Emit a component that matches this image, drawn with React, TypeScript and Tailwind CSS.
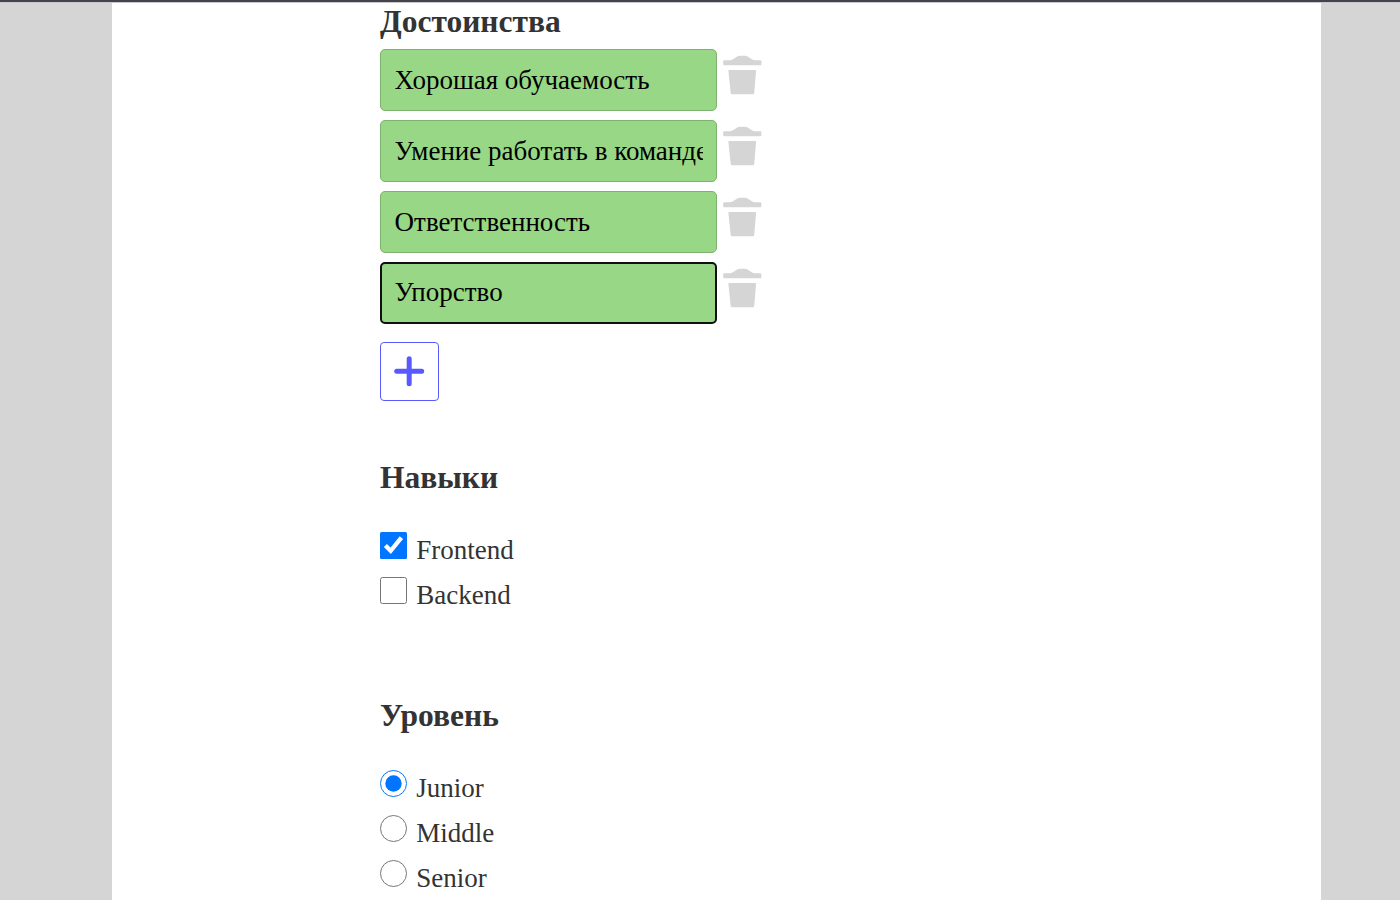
import { useState } from 'react';

const initialStrengths = ['Хорошая обучаемость', 'Умение работать в команде', 'Ответственность', 'Упорство'];

function TrashIcon() {
  return (
    <svg className="ml-1.5 mt-1.5 block h-10 w-[39px] shrink-0" viewBox="0 0 39 40" fill="#d5d5d5">
      <path d="M1.2 5.3H7Q8.4 5.2 9.6 4.5L14.2 1.5Q15.5.7 16.8.7H22Q23.3.7 24.6 1.5L29.2 4.5Q30.4 5.2 31.8 5.3H37.3Q38.4 5.3 38.4 6.3V9.3Q38.4 10.3 37.3 10.3H1.2Q.2 10.3.2 9.3V6.3Q.2 5.3 1.2 5.3Z" />
      <path d="M6.3 15H32.2Q33.2 15 33.1 16L31.2 38Q31 39.2 30 39.2H9Q7.9 39.2 7.7 38L5.4 16Q5.3 15 6.3 15Z" />
    </svg>
  );
}

function StrengthRow({ value, active, onChange }: { value: string; active: boolean; onChange: (v: string) => void }) {
  return (
    <div className="flex items-start">
      <input
        value={value}
        onChange={(e) => onChange(e.target.value)}
        className={
          'h-[62px] w-[337px] rounded-[5px] bg-[#98d785] text-[27px] text-black outline-none ' +
          (active ? 'border-2 border-[#101010] pb-px pl-[12.6px] pr-3' : 'border border-[#7db36d] pl-[13.6px] pr-[13px]')
        }
      />
      <button type="button" aria-label="Удалить">
        <TrashIcon />
      </button>
    </div>
  );
}

function Choice({ label, kind, checked, onSelect }: { label: string; kind: 'checkbox' | 'radio'; checked: boolean; onSelect: () => void }) {
  return (
    <label className="flex h-[45px] items-start">
      <input type={kind} checked={checked} onChange={onSelect} className="sr-only" />
      <svg className="block size-[27px]" viewBox="0 0 27 27" fill="none">
        {kind === 'checkbox' && checked && (
          <>
            <rect width="27" height="27" rx="1.5" fill="#0075ff" />
            <path d="M5.4 13.4L10.7 18.8L21.4 5.6" stroke="#fff" strokeWidth="4.3" />
          </>
        )}
        {kind === 'checkbox' && !checked && <rect x=".5" y=".5" width="26" height="26" rx="2" fill="#fff" stroke="#767676" />}
        {kind === 'radio' && <circle cx="13.5" cy="13.5" r="13" fill="#fff" stroke={checked ? '#0075ff' : '#767676'} />}
        {kind === 'radio' && checked && <circle cx="13.5" cy="13.5" r="8.2" fill="#0075ff" />}
      </svg>
      <span className="ml-[9.3px] mt-[3px] text-[27px] leading-[30px]">{label}</span>
    </label>
  );
}

export default function App() {
  const [strengths, setStrengths] = useState(initialStrengths);
  const [skills, setSkills] = useState(['Frontend']);
  const [level, setLevel] = useState('Junior');

  const toggleSkill = (s: string) => setSkills(skills.includes(s) ? skills.filter((x) => x !== s) : [...skills, s]);

  return (
    <div className="flex h-[900px] flex-col overflow-hidden bg-[#d5d5d5] font-['Liberation_Serif',serif] text-[#333333]">
      <div className="h-[3px] shrink-0 border-b border-[#c9c8ca] bg-[#45414e]" />
      <main className="ml-28 h-[897px] w-[1209px] bg-white pl-[268px]">
        <h2 className="h-[46px] pt-px text-[31.5px] font-bold leading-9">Достоинства</h2>
        <div className="flex flex-col gap-[9px]">
          {strengths.map((s, i) => (
            <StrengthRow
              key={i}
              value={s}
              active={i === 3}
              onChange={(v) => setStrengths(strengths.map((x, j) => (j === i ? v : x)))}
            />
          ))}
        </div>
        <button
          type="button"
          aria-label="Добавить"
          onClick={() => setStrengths([...strengths, ''])}
          className="mt-[18px] flex size-[59px] items-center justify-center rounded-[4px] border border-[#585aff]"
        >
          <svg className="block size-[31px]" viewBox="0 0 31 31" stroke="#585aff" strokeWidth="5" strokeLinecap="round">
            <path d="M15.2 2.8V27.8M2.7 15.3H27.7" />
          </svg>
        </button>
        <h2 className="mt-[59px] text-[31.5px] font-bold leading-9">Навыки</h2>
        <div className="mt-9">
          {['Frontend', 'Backend'].map((s) => (
            <Choice key={s} kind="checkbox" label={s} checked={skills.includes(s)} onSelect={() => toggleSkill(s)} />
          ))}
        </div>
        <h2 className="mt-[76px] text-[31.5px] font-bold leading-9">Уровень</h2>
        <div className="mt-9">
          {['Junior', 'Middle', 'Senior'].map((s) => (
            <Choice key={s} kind="radio" label={s} checked={level === s} onSelect={() => setLevel(s)} />
          ))}
        </div>
      </main>
    </div>
  );
}
